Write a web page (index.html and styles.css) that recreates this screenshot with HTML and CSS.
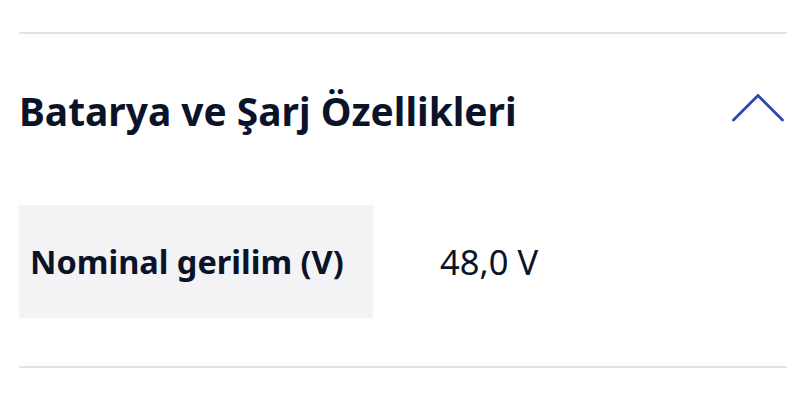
FILE: index.html
```html
<!DOCTYPE html>
<html lang="tr">
<head>
    <meta charset="UTF-8">
    <meta name="viewport" content="width=device-width, initial-scale=1.0">
    <title>Batarya ve Şarj Özellikleri</title>
    <link rel="stylesheet" href="styles.css">
</head>
<body>
    <div class="akordeon">
        <div class="baslik">
            <h2>Batarya ve Şarj Özellikleri</h2>
            <svg class="ok" width="52" height="29" viewBox="0 0 52 29">
                <polyline points="1.5,26 26,1.5 50.5,26" fill="none" stroke="#2a47b3" stroke-width="2.8" stroke-linecap="round" stroke-linejoin="miter"/>
            </svg>
        </div>
        <table class="ozellikler">
            <tr>
                <th>Nominal gerilim (V)</th>
                <td>48,0 V</td>
            </tr>
        </table>
    </div>
</body>
</html>
```
FILE: styles.css
```css
body {
    margin: 0;
    font-family: "Noto Sans", sans-serif;
    color: #0b1329;
    background-color: #fff;
}

.akordeon {
    margin: 32px 19px 0 19px;
    border-top: 2px solid #dfe4e8;
    border-bottom: 2px solid #dfe4e8;
    padding-bottom: 48px;
}

.baslik {
    display: flex;
    justify-content: space-between;
    align-items: center;
    height: 152px;
    margin-bottom: 19px;
}

.baslik h2 {
    margin: 0;
    font-size: 38.9px;
    font-weight: 700;
}

.ok {
    margin-right: 3px;
    margin-bottom: 4px;
}

.ozellikler {
    border-collapse: collapse;
}

.ozellikler th {
    background-color: #f3f3f5;
    width: 343px;
    height: 113px;
    padding: 0 0 0 11px;
    text-align: left;
    font-size: 32.5px;
    font-weight: 700;
}

.ozellikler td {
    padding: 0 0 0 67px;
    font-size: 34.5px;
    font-weight: 400;
}
```
